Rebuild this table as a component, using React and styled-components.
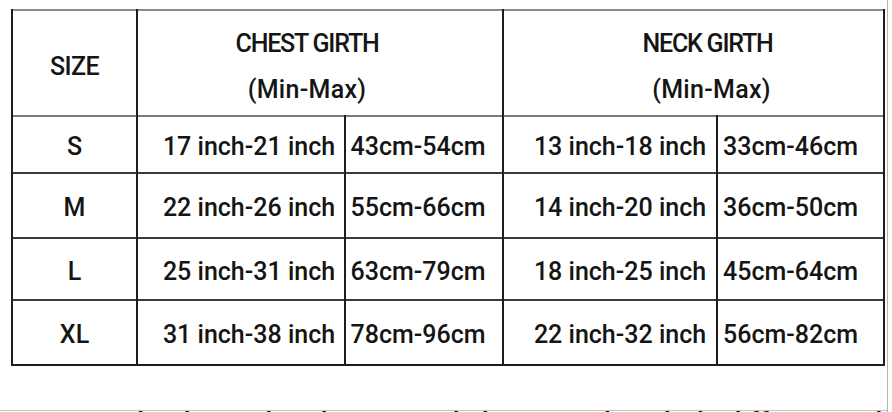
import React from 'react'
import styled, { createGlobalStyle } from 'styled-components'

const GlobalStyle = createGlobalStyle`
  html, body {
    margin: 0;
    padding: 0;
    background: #fff;
  }
  body {
    font-family: Roboto, "Liberation Sans", Arial, sans-serif;
    font-weight: 500;
    color: #151515;
  }
`

const sizes = [
  { size: 'S', chestIn: '17 inch-21 inch', chestCm: '43cm-54cm', neckIn: '13 inch-18 inch', neckCm: '33cm-46cm', h: 57, line: '#7a7a7a' },
  { size: 'M', chestIn: '22 inch-26 inch', chestCm: '55cm-66cm', neckIn: '14 inch-20 inch', neckCm: '36cm-50cm', h: 65, line: '#3a3a3a' },
  { size: 'L', chestIn: '25 inch-31 inch', chestCm: '63cm-79cm', neckIn: '18 inch-25 inch', neckCm: '45cm-64cm', h: 62, line: '#3a3a3a' },
  { size: 'XL', chestIn: '31 inch-38 inch', chestCm: '78cm-96cm', neckIn: '22 inch-32 inch', neckCm: '56cm-82cm', h: 65, line: '#3a3a3a' },
]

function SizeChart() {
  return (
    <Page>
      <Sheet>
        <Table>
          <colgroup>
            <col style={{ width: 125 }} />
            <col style={{ width: 208 }} />
            <col style={{ width: 158 }} />
            <col style={{ width: 214 }} />
            <col style={{ width: 167 }} />
          </colgroup>
          <thead>
            <HeadRow>
              <HeadCell>SIZE</HeadCell>
              <GroupCell colSpan={2} $shift={-13}>
                <Title>CHEST GIRTH</Title>
                <Sub>(Min-Max)</Sub>
              </GroupCell>
              <GroupCell colSpan={2} $shift={14}>
                <Title>NECK GIRTH</Title>
                <Sub $nudge={8}>(Min-Max)</Sub>
              </GroupCell>
            </HeadRow>
          </thead>
          <tbody>
            {sizes.map((row) => (
              <Row key={row.size} $h={row.h} $line={row.line}>
                <SizeCell>{row.size}</SizeCell>
                <Cell $shift={8}>{row.chestIn}</Cell>
                <Cell $shift={-6}>{row.chestCm}</Cell>
                <Cell $shift={10}>{row.neckIn}</Cell>
                <Cell $shift={-10}>{row.neckCm}</Cell>
              </Row>
            ))}
          </tbody>
        </Table>
        <Footer>
          <FooterText>
            the data is hand measured, there may be a little difference, thank you for understanding
          </FooterText>
        </Footer>
      </Sheet>
    </Page>
  )
}

export default function App() {
  return (
    <>
      <GlobalStyle />
      <SizeChart />
    </>
  )
}

const Page = styled.div`
  width: 892px;
  height: 412px;
  overflow: hidden;
  background: #fff;
`

const Sheet = styled.div`
  width: 888px;
  height: 412px;
  box-sizing: border-box;
  border-right: 1px solid #b4b4b4;
  padding: 9px 0 0 11px;
  display: flex;
  flex-direction: column;
`

const Table = styled.table`
  width: 874px;
  table-layout: fixed;
  border-collapse: collapse;
  border-top: 2px solid #8c8c8c;
  border-left: 2px solid #1e1e1e;
  border-right: 2px solid #1e1e1e;
  border-bottom: 2px solid #1e1e1e;

  td, th {
    padding: 0;
    border-left: 2px solid #1e1e1e;
    border-right: 2px solid #1e1e1e;
    vertical-align: middle;
    white-space: nowrap;
    overflow: hidden;
  }
`

const HeadRow = styled.tr`
  height: 106px;
`

const HeadCell = styled.th`
  font-size: 25px;
  font-weight: 500;
  text-align: center;
  padding-top: 6px !important;
  letter-spacing: -0.6px;
`

const GroupCell = styled.th`
  font-weight: 500;
  text-align: center;
  padding-top: 8px !important;
  padding-left: ${(p) => (p.$shift > 0 ? p.$shift * 2 : 0)}px !important;
  padding-right: ${(p) => (p.$shift < 0 ? -p.$shift * 2 : 0)}px !important;
`

const Title = styled.div`
  font-size: 25px;
  line-height: 46px;
  letter-spacing: -1.2px;
`

const Sub = styled.div`
  font-size: 25px;
  line-height: 46px;
  letter-spacing: 0.3px;
  margin-left: ${(p) => p.$nudge || 0}px;
`

const Row = styled.tr`
  height: ${(p) => p.$h}px;
  border-top: 2px solid ${(p) => p.$line};
`

const SizeCell = styled.td`
  font-size: 25px;
  text-align: center;
  padding-top: 4px !important;
`

const Cell = styled.td`
  font-size: 25px;
  text-align: center;
  padding-top: 4px !important;
  padding-left: ${(p) => (p.$shift > 0 ? p.$shift * 2 : 0)}px !important;
  padding-right: ${(p) => (p.$shift < 0 ? -p.$shift * 2 : 0)}px !important;
`

const Footer = styled.div`
  margin-top: 44px;
  margin-left: -11px;
  border-top: 1px solid #c4c4c4;
  padding-left: 128px;
`

const FooterText = styled.div`
  font-size: 28px;
  line-height: 20px;
  padding-top: 2px;
  white-space: nowrap;
  color: #111;
`
